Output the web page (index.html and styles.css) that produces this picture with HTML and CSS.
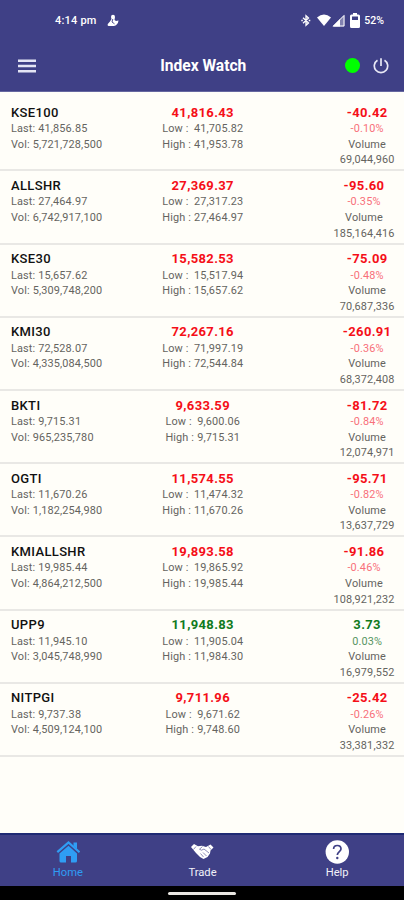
FILE: index.html
```
<!DOCTYPE html>
<html lang="en">
<head>
<meta charset="utf-8">
<title>Index Watch</title>
<link rel="stylesheet" href="styles.css">
</head>
<body>
<div class="status">
  <span class="time">4:14 pm</span>
  <svg class="app" width="12" height="13" viewBox="0 0 12 13"><path fill="#fff" d="M4 3Q4 .8 6 .8T8 3L7.500 6 9 7 11.500 6.500Q11.500 9.500 9 11.300L7 12H1.500Q0 11.500.8 10L3 7.500 4.500 5Z"/><path fill="none" stroke="#3f4086" stroke-width=".9" d="M5.800 5 5 8 7.500 9.800"/></svg>
  <div class="signals">
    <svg width="10" height="13" viewBox="0 0 10 13" fill="none" stroke="#fff" stroke-width="1.300"><path d="M2 3.800 7.500 9 5 11.200V1.800L7.500 4 2 9.200M.3 6.500h1.500M7.700 6.500h1.600"/></svg>
    <svg class="wifi" width="14" height="13" viewBox="0 0 14 13"><path fill="#fff" d="M0 3.500Q7-2.500 14 3.500L7 12Z"/></svg>
    <svg class="cell" width="13" height="13" viewBox="0 0 13 13"><path fill="#fff" fill-opacity=".35" d="M12.500.5v12H.5Z"/><path fill="#fff" d="M8 5v7.500H.5Z"/><path fill="none" stroke="#fff" d="M12 1.500V12H1.500Z"/></svg>
    <svg class="battery" width="10" height="15" viewBox="0 0 10 15"><path fill="#fff" fill-rule="evenodd" d="M3 0h4v1.500h1.500Q10 1.500 10 3v10.500q0 1.500-1.500 1.500h-7Q0 15 0 13.500V3q0-1.500 1.500-1.500H3ZM2 3.500V7h6V3.500Z"/></svg>
    <span>52%</span>
  </div>
</div>
<header class="bar">
  <svg class="menu" width="18" height="14" viewBox="0 0 18 14"><path stroke="#e4e5f4" stroke-width="2.400" d="M0 1.700h18M0 7h18M0 12.300h18"/></svg>
  <h1>Index Watch</h1>
  <div class="tools">
    <i class="dot"></i>
    <svg width="16" height="16" viewBox="0 0 16 16" fill="none" stroke="#e8e8f5" stroke-width="1.700"><path d="M8 .3V8M4.500 2.200a6.700 6.700 0 1 0 7 0"/></svg>
  </div>
</header>
<main class="list">
  <section class="row">
    <div class="left"><h2>KSE100</h2><p>Last: 41,856.85</p><p>Vol: 5,721,728,500</p></div>
    <div class="mid"><b>41,816.43</b><p><span>Low :</span><span>41,705.82</span></p><p><span>High :</span><span>41,953.78</span></p></div>
    <div class="right"><div><b>-40.42</b><p class="pct">-0.10%</p><p>Volume</p><p>69,044,960</p></div></div>
  </section>
  <section class="row">
    <div class="left"><h2>ALLSHR</h2><p>Last: 27,464.97</p><p>Vol: 6,742,917,100</p></div>
    <div class="mid"><b>27,369.37</b><p><span>Low :</span><span>27,317.23</span></p><p><span>High :</span><span>27,464.97</span></p></div>
    <div class="right"><div><b>-95.60</b><p class="pct">-0.35%</p><p>Volume</p><p>185,164,416</p></div></div>
  </section>
  <section class="row">
    <div class="left"><h2>KSE30</h2><p>Last: 15,657.62</p><p>Vol: 5,309,748,200</p></div>
    <div class="mid"><b>15,582.53</b><p><span>Low :</span><span>15,517.94</span></p><p><span>High :</span><span>15,657.62</span></p></div>
    <div class="right"><div><b>-75.09</b><p class="pct">-0.48%</p><p>Volume</p><p>70,687,336</p></div></div>
  </section>
  <section class="row">
    <div class="left"><h2>KMI30</h2><p>Last: 72,528.07</p><p>Vol: 4,335,084,500</p></div>
    <div class="mid"><b>72,267.16</b><p><span>Low :</span><span>71,997.19</span></p><p><span>High :</span><span>72,544.84</span></p></div>
    <div class="right"><div><b>-260.91</b><p class="pct">-0.36%</p><p>Volume</p><p>68,372,408</p></div></div>
  </section>
  <section class="row">
    <div class="left"><h2>BKTI</h2><p>Last: 9,715.31</p><p>Vol: 965,235,780</p></div>
    <div class="mid"><b>9,633.59</b><p><span>Low :</span><span>9,600.06</span></p><p><span>High :</span><span>9,715.31</span></p></div>
    <div class="right"><div><b>-81.72</b><p class="pct">-0.84%</p><p>Volume</p><p>12,074,971</p></div></div>
  </section>
  <section class="row">
    <div class="left"><h2>OGTI</h2><p>Last: 11,670.26</p><p>Vol: 1,182,254,980</p></div>
    <div class="mid"><b>11,574.55</b><p><span>Low :</span><span>11,474.32</span></p><p><span>High :</span><span>11,670.26</span></p></div>
    <div class="right"><div><b>-95.71</b><p class="pct">-0.82%</p><p>Volume</p><p>13,637,729</p></div></div>
  </section>
  <section class="row">
    <div class="left"><h2>KMIALLSHR</h2><p>Last: 19,985.44</p><p>Vol: 4,864,212,500</p></div>
    <div class="mid"><b>19,893.58</b><p><span>Low :</span><span>19,865.92</span></p><p><span>High :</span><span>19,985.44</span></p></div>
    <div class="right"><div><b>-91.86</b><p class="pct">-0.46%</p><p>Volume</p><p>108,921,232</p></div></div>
  </section>
  <section class="row up">
    <div class="left"><h2>UPP9</h2><p>Last: 11,945.10</p><p>Vol: 3,045,748,990</p></div>
    <div class="mid"><b>11,948.83</b><p><span>Low :</span><span>11,905.04</span></p><p><span>High :</span><span>11,984.30</span></p></div>
    <div class="right"><div><b>3.73</b><p class="pct">0.03%</p><p>Volume</p><p>16,979,552</p></div></div>
  </section>
  <section class="row">
    <div class="left"><h2>NITPGI</h2><p>Last: 9,737.38</p><p>Vol: 4,509,124,100</p></div>
    <div class="mid"><b>9,711.96</b><p><span>Low :</span><span>9,671.62</span></p><p><span>High :</span><span>9,748.60</span></p></div>
    <div class="right"><div><b>-25.42</b><p class="pct">-0.26%</p><p>Volume</p><p>33,381,332</p></div></div>
  </section>
</main>
<nav class="tabs">
  <a class="active"><svg width="24" height="24" viewBox="0 0 24 24" fill="#2f9df4"><path d="M12.500 5.700 21 13.500V21q0 1.500-1.500 1.500H15V16h-5v6.500H5Q3.500 22.500 3.500 21V13.500Z"/><path fill="none" stroke="#2f9df4" stroke-width="2.200" d="M1.300 12.200 12.500 2.500 23.500 12.200"/><path d="M17.500 2.500H21V9L17.500 6Z"/></svg><span>Home</span></a>
  <a><svg width="24" height="24" viewBox="0 0 24 24"><path fill="#fff" d="M1 7 4 4 8 6.300 12 5.800 16 7 20.500 4.500 23.500 7.500 20.500 10.500 20 13.500 17.500 17 13.500 19 10 17 6 13 3.500 10Z"/><path fill="none" stroke="#3f4086" stroke-width=".6" d="M12.500 6.500 9.500 9.200 11.500 10.200 14 9 19 13M13 12.500l3.500 3.500M10.500 13.500l3 3.500M3.500 9.500 6 6.500M18.500 6.500l2.500 3"/></svg><span>Trade</span></a>
  <a><svg width="24" height="24" viewBox="0 0 24 24"><circle cx="12.300" cy="12" r="11.700" fill="#fff"/><path fill="none" stroke="#3f4086" stroke-width="1.700" d="M8.600 9Q8.600 5.500 12.300 5.500T16 9C16 11.500 12.300 11.700 12.300 15"/><circle cx="12.300" cy="18" r="1.200" fill="#3f4086"/></svg><span>Help</span></a>
</nav>
<div class="gesture"><i></i></div>
</body>
</html>
```
FILE: styles.css
```
* { box-sizing: border-box; }
body {
  margin: 0;
  height: 900px;
  display: flex;
  flex-direction: column;
  overflow: hidden;
  background: #fffef9;
  font-family: Roboto, "Liberation Sans", sans-serif;
}
h1, h2, p { margin: 0; }
svg { display: block; flex: none; }
.status {
  height: 40px;
  flex: none;
  display: flex;
  align-items: center;
  padding: 0 20px 0 55px;
  background: #3f4086;
  color: #fff;
  font-size: 11px;
  font-weight: 500;
  letter-spacing: .2px;
}
.time { width: 52px; white-space: nowrap; }
.signals {
  margin-left: auto;
  display: flex;
  align-items: center;
}
.signals span { font-size: 10.5px; letter-spacing: 0; margin-left: 4px; }
.wifi { margin-left: 6px; }
.cell { margin-left: 1px; }
.battery { margin-left: 5px; }
.bar {
  height: 52px;
  flex: none;
  display: grid;
  grid-template-columns: 1fr auto 1fr;
  align-items: center;
  padding: 0 15px 0 17.5px;
  border-bottom: 1px solid #6667a0;
  background: #3f4086;
}
.bar h1 { color: #fff; font-size: 15.6px; line-height: 20px; font-weight: 700; }
.tools { display: flex; justify-content: flex-end; align-items: center; gap: 13.5px; }
.dot { width: 15px; height: 15px; border-radius: 50%; background: #0f0; }
.list { flex: 1; padding-top: 6.3px; }
.row {
  height: 73.2px;
  display: grid;
  grid-template-columns: 1fr 1fr 1fr;
  padding: 6.5px 9.5px 0 11px;
  border-bottom: 2px solid #e9e8e5;
  color: #f50f18;
}
.row.up { color: #107a20; }
.row h2, .row b {
  display: block;
  font-size: 13px;
  line-height: 16.5px;
  font-weight: 700;
  letter-spacing: .35px;
}
.row h2 { color: #111; font-weight: 500; letter-spacing: .35px; }
.row p {
  color: #65645f;
  font-size: 10.9px;
  line-height: 15.6px;
  letter-spacing: .15px;
  white-space: nowrap;
}
.row .pct { color: #f8707a; font-size: 10.9px; }
.row.up .pct { color: #579562; }
.mid { width: max-content; justify-self: center; text-align: center; }
.mid p { display: flex; justify-content: space-between; gap: 3px; }
.right { display: flex; justify-content: flex-end; text-align: center; }
.tabs {
  height: 53px;
  flex: none;
  display: grid;
  grid-template-columns: repeat(3, 1fr);
  padding-top: 5px;
  border-top: 2px solid #1f2a74;
  background: #3f4086;
  color: #f1f1f8;
  font-size: 11.2px;
  line-height: 17px;
}
.tabs a { display: flex; flex-direction: column; align-items: center; padding-left: 1px; }
.tabs .active { color: #2f9df4; }
.gesture {
  height: 14px;
  flex: none;
  display: flex;
  justify-content: center;
  padding-top: 6px;
  background: #000;
}
.gesture i { width: 68px; height: 3px; border-radius: 2px; background: #e9e7e2; }
```
